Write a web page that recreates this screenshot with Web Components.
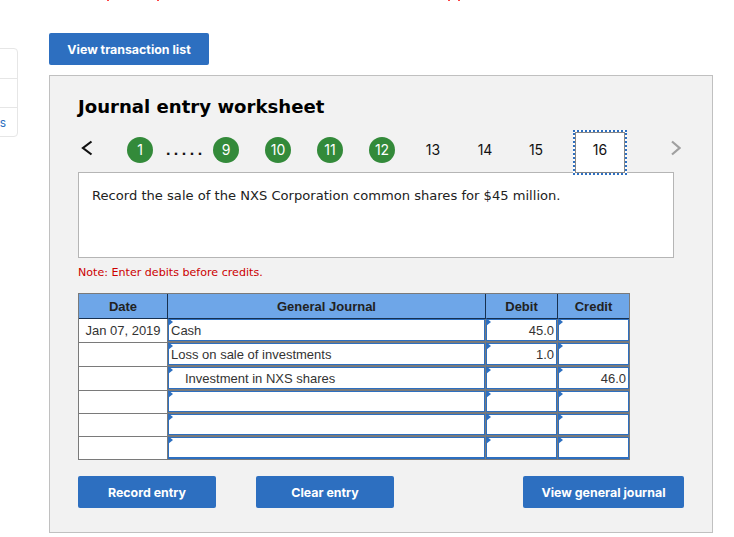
<!DOCTYPE html>
<html>
<head>
<meta charset="utf-8">
<style>
  html, body { margin: 0; padding: 0; background: #fff; overflow: hidden; }
  body { width: 734px; height: 537px; font-family: "Inter", "Liberation Sans", sans-serif; }
  .page { display: grid; grid-template-columns: 49px 664px; align-content: start; }
</style>
</head>
<body>
<clip-marks></clip-marks>
<div class="page">
  <side-list></side-list>
  <div>
    <blue-button style="width:160px;margin-top:33px;margin-bottom:10px">View transaction list</blue-button>
    <worksheet-panel></worksheet-panel>
  </div>
</div>

<script>
// bottoms of the red line that is scrolled off above the page
class ClipMarks extends HTMLElement {
  constructor() {
    super();
    this.attachShadow({ mode: 'open' });
  }
  connectedCallback() {
    this.shadowRoot.innerHTML = `
      <style>
        :host { display: flex; position: absolute; top: 0; left: 0; height: 1px; }
        i { display: block; width: 2px; height: 1px; background: #f44; }
      </style>
      <i style="margin-left:107px"></i><i style="margin-left:48px"></i><i style="margin-left:289px"></i><i style="margin-left:8px"></i>
    `;
  }
}
class SideList extends HTMLElement {
  constructor() {
    super();
    this.attachShadow({ mode: 'open' });
  }
  connectedCallback() {
    this.shadowRoot.innerHTML = `
      <style>
        :host { display: block; padding-top: 48px; }
        .card {
          width: 41px; margin-left: -23px; height: 89px; box-sizing: border-box;
          background: #fff; border: 1px solid #e6e6e6; border-radius: 4px;
          display: grid; grid-template-rows: 29px 29px 1fr;
          font: 12px "Inter", sans-serif; color: #2d6fc0;
        }
        .card div + div { border-top: 1px solid #e6e6e6; }
        .card div:last-child { display: flex; align-items: center; justify-content: flex-end; padding-right: 11px; }
      </style>
      <div class="card"><div></div><div></div><div>s</div></div>
    `;
  }
}
class BlueButton extends HTMLElement {
  constructor() {
    super();
    this.attachShadow({ mode: 'open' });
  }
  connectedCallback() {
    this.shadowRoot.innerHTML = `
      <style>
        :host {
          display: flex; align-items: center; justify-content: center; box-sizing: border-box;
          height: 32px; background: #2d6fc0; border-radius: 2px; color: #fff;
          font: 700 12.4px "Inter", "Liberation Sans", sans-serif;
        }
      </style>
      <slot></slot>
    `;
  }
}
class StepNav extends HTMLElement {
  constructor() {
    super();
    this.attachShadow({ mode: 'open' });
  }
  connectedCallback() {
    const done = n => `<span class="step"><b>${n}</b></span>`;
    const open = n => `<span class="step">${n}</span>`;
    this.shadowRoot.innerHTML = `
      <style>
        :host {
          display: grid; height: 46px; position: relative; z-index: 1;
          grid-template-columns: 49px 26px 60px 26px 26px 26px 26px 26px 26px 26px 25px 26px 26px 26px 25px 26px 24px 54px 1fr;
          align-items: center;
          font: 14px "Inter", "Liberation Sans", sans-serif; color: #111;
        }
        svg { display: block; margin-bottom: 10px; }
        .step { display: flex; justify-content: center; margin-bottom: 7px; }
        .step b {
          width: 26px; height: 26px; border-radius: 50%; background: #338a3a; color: #fff;
          font-weight: 400; display: flex; align-items: center; justify-content: center;
        }
        .gap { text-align: center; font: 700 13px "DejaVu Sans", sans-serif; letter-spacing: 3px; padding-left: 5px; margin-bottom: 6px; color: #111; }
        .cur {
          align-self: start; height: 45px; box-sizing: border-box; background: #fff; padding-bottom: 6px;
          border: 2px dotted #2d6fc0; outline: 1px solid #888; outline-offset: -3px;
          display: flex; align-items: center; justify-content: center;
        }
      </style>
      <svg width="49" height="20" viewBox="0 0 49 20"><path d="M13.5 3.5 L5 10 L13.5 16.5" fill="none" stroke="#111" stroke-width="2.2"/></svg>
      ${done(1)}
      <span class="gap">.....</span>
      ${done(9)}<span></span>${done(10)}<span></span>${done(11)}<span></span>${done(12)}<span></span>
      ${open(13)}<span></span>${open(14)}<span></span>${open(15)}<span></span>
      <div class="cur">16</div>
      <svg style="margin-left:43px" width="11" height="20" viewBox="0 0 11 20"><path d="M2 3.5 L9.5 10 L2 16.5" fill="none" stroke="#a0a0a0" stroke-width="2.2"/></svg>
    `;
  }
}
class JournalTable extends HTMLElement {
  constructor() {
    super();
    this.attachShadow({ mode: 'open' });
  }
  connectedCallback() {
    const rows = [
      ['Jan 07, 2019', 'Cash', '45.0', ''],
      ['', 'Loss on sale of investments', '1.0', ''],
      ['', '<span style="padding-left:14px">Investment in NXS shares</span>', '', '46.0'],
      ['', '', '', ''], ['', '', '', ''], ['', '', '', '']
    ];
    const body = rows.map(r => `
      <div class="date">${r[0]}</div>
      <div class="cell">${r[1]}</div>
      <div class="cell num">${r[2]}</div>
      <div class="cell num">${r[3]}</div>`).join('');
    this.shadowRoot.innerHTML = `
      <style>
        :host {
          display: grid; width: 552px; box-sizing: border-box;
          grid-template-columns: 88px 318px 72px 72px;
          grid-template-rows: 25px 24px 24px 24px 23px 23px 22px;
          background: #7a7a7a; border: 1px solid #7a7a7a;
          font: 13px "Liberation Sans", sans-serif; color: #333;
        }
        .head {
          background: #6ea6e8; color: #222; font-weight: 700;
          display: flex; align-items: center; justify-content: center;
          border-bottom: 1px solid #17304f;
        }
        .head + .head { border-left: 1px solid #17304f; }
        .date {
          background: #fff; margin-bottom: 1px;
          display: flex; align-items: center; justify-content: center; white-space: nowrap;
        }
        .date:nth-last-child(4) { margin-bottom: 0; }
        .cell {
          position: relative; background: #fff; margin: 0 0 2px 1px;
          border: 1px solid #2d6fc0;
          display: flex; align-items: center; padding-left: 2px; white-space: nowrap; min-width: 0;
        }
        .cell:nth-last-child(-n+3) { margin-bottom: 0; border-bottom-width: 2px; }
        .cell::before {
          content: ""; position: absolute; left: -1px; top: -2px;
          border-left: 5px solid #2d6fc0; border-top: 4px solid transparent; border-bottom: 4px solid transparent;
        }
        .num { justify-content: flex-end; padding: 0 2px 0 0; }
      </style>
      <div class="head">Date</div><div class="head">General Journal</div><div class="head">Debit</div><div class="head">Credit</div>
      ${body}
    `;
  }
}
class WorksheetPanel extends HTMLElement {
  constructor() {
    super();
    this.attachShadow({ mode: 'open' });
  }
  connectedCallback() {
    this.shadowRoot.innerHTML = `
      <style>
        :host {
          display: block; box-sizing: border-box; width: 664px; height: 458px;
          background: #f2f2f2; border: 1px solid #c0c0c0; padding: 19px 38px 0 28px;
        }
        h2 { margin: 0; font: 700 18.1px/24px "DejaVu Sans", sans-serif; color: #000; }
        step-nav { margin-top: 11px; }
        .prompt {
          height: 86px; box-sizing: border-box; background: #fff; border: 1px solid #b5b5b5;
          margin-top: -4px; padding: 14px 13px; font: 13.1px/18px "DejaVu Sans", sans-serif; color: #222;
        }
        .note { margin: 8px 0 13px; font: 11.1px/14px "DejaVu Sans", sans-serif; color: #c00; }
        .actions { display: grid; grid-template-columns: 138px 40px 138px 129px 161px; margin: 16px -10px 0 0; }
      </style>
      <h2>Journal entry worksheet</h2>
      <step-nav></step-nav>
      <div class="prompt">Record the sale of the NXS Corporation common shares for $45 million.</div>
      <div class="note">Note: Enter debits before credits.</div>
      <journal-table></journal-table>
      <div class="actions">
        <blue-button>Record entry</blue-button><span></span>
        <blue-button>Clear entry</blue-button><span></span>
        <blue-button>View general journal</blue-button>
      </div>
    `;
  }
}
customElements.define('clip-marks', ClipMarks);
customElements.define('side-list', SideList);
customElements.define('blue-button', BlueButton);
customElements.define('step-nav', StepNav);
customElements.define('journal-table', JournalTable);
customElements.define('worksheet-panel', WorksheetPanel);
</script>
</body>
</html>
